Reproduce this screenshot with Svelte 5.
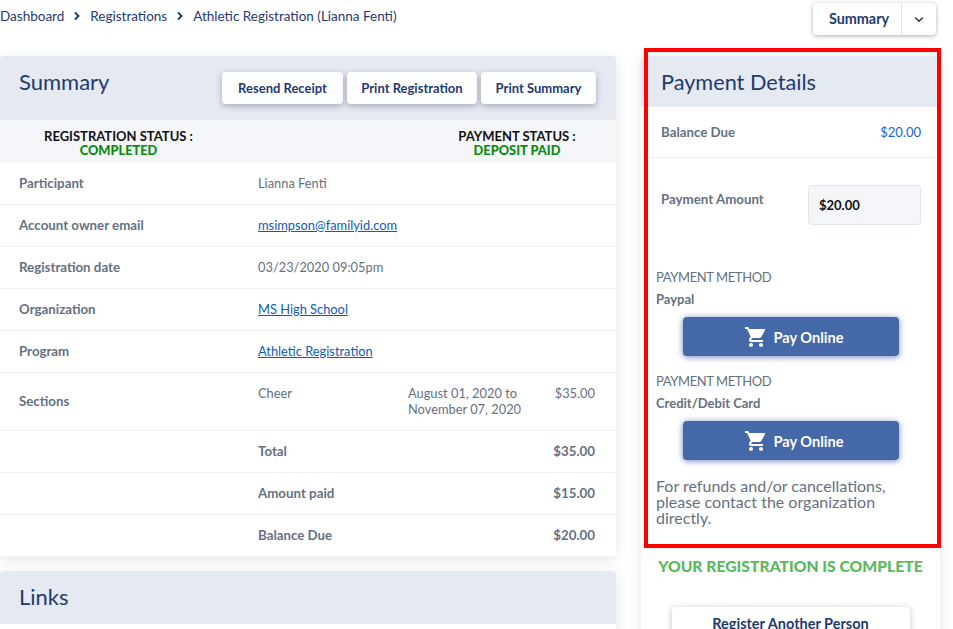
<script>
  const rows = [
    { label: 'Participant', value: 'Lianna Fenti' },
    { label: 'Account owner email', value: 'msimpson@familyid.com', link: true },
    { label: 'Registration date', value: '03/23/2020 09:05pm' },
    { label: 'Organization', value: 'MS High School', link: true },
    { label: 'Program', value: 'Athletic Registration', link: true }
  ];
  const totals = [
    { label: 'Total', value: '$35.00' },
    { label: 'Amount paid', value: '$15.00' },
    { label: 'Balance Due', value: '$20.00' }
  ];
  const methods = ['Paypal', 'Credit/Debit Card'];
</script>

<div class="page">
  <div class="topbar">
    <nav class="crumbs">
      <span>Dashboard</span>
      <svg class="sep" viewBox="0 0 8 10" width="8" height="10"><path d="M2 1.500 5.500 5 2 8.500" fill="none" stroke="#1f3a70" stroke-width="1.900"/></svg>
      <span>Registrations</span>
      <svg class="sep" viewBox="0 0 8 10" width="8" height="10"><path d="M2 1.500 5.500 5 2 8.500" fill="none" stroke="#1f3a70" stroke-width="1.900"/></svg>
      <span>Athletic Registration (Lianna Fenti)</span>
    </nav>
    <div class="split">
      <span class="split-label">Summary</span>
      <span class="split-caret">
        <svg viewBox="0 0 12 8" width="10" height="7"><path d="M1.500 1.500 6 6l4.500-4.500" fill="none" stroke="#333" stroke-width="1.800"/></svg>
      </span>
    </div>
  </div>

  <div class="columns">
    <div class="left">
      <section class="card">
        <header class="head summary-head">
          <h2>Summary</h2>
          <div class="actions">
            <button class="r1">Resend Receipt</button>
            <button class="r2">Print Registration</button>
            <button class="r3">Print Summary</button>
          </div>
        </header>
        <div class="status">
          <div class="st st1"><b>REGISTRATION STATUS :</b><em>COMPLETED</em></div>
          <div class="st st2"><b>PAYMENT STATUS :</b><em>DEPOSIT PAID</em></div>
        </div>
        {#each rows as r}
          <div class="row">
            <div class="lab">{r.label}</div>
            <div class="val">{#if r.link}<a href="#top">{r.value}</a>{:else}{r.value}{/if}</div>
          </div>
        {/each}
        <div class="row sections">
          <div class="lab">Sections</div>
          <div class="val cheer">Cheer</div>
          <div class="val dates">August 01, 2020 to<br />November 07, 2020</div>
          <div class="val price">$35.00</div>
        </div>
        {#each totals as t}
          <div class="row total">
            <div class="lab"></div>
            <div class="lab t-lab">{t.label}</div>
            <div class="lab t-val">{t.value}</div>
          </div>
        {/each}
      </section>

      <section class="card links">
        <header class="head links-head"><h2>Links</h2></header>
      </section>
    </div>

    <aside class="right">
      <div class="pay-card">
        <header class="head pay-head"><h2>Payment Details</h2></header>
        <div class="balance">
          <span class="lab">Balance Due</span>
          <span class="amount">$20.00</span>
        </div>
        <div class="pay-amount">
          <span class="lab">Payment Amount</span>
          <div class="input">$20.00</div>
        </div>
        <div class="methods">
          {#each methods as m}
            <div class="method">
              <div class="m-title">PAYMENT METHOD</div>
              <div class="m-name">{m}</div>
              <button class="pay">
                <svg viewBox="0 0 24 24" width="24" height="24"><path fill="#fff" d="M7 18c-1.100 0-1.990.9-1.990 2S5.900 22 7 22s2-.9 2-2-.9-2-2-2zM1 2v2h2l3.600 7.590-1.350 2.450c-.16.280-.25.610-.25.960 0 1.100.9 2 2 2h12v-2H7.420c-.14 0-.25-.110-.25-.250l.03-.120.9-1.630h7.450c.750 0 1.410-.410 1.750-1.030l3.580-6.490A1 1 0 0 0 20 4H5.210l-.94-2H1zm16 16c-1.100 0-1.990.9-1.990 2s.89 2 1.990 2 2-.9 2-2-.9-2-2-2z"/></svg>
                <span>Pay Online</span>
              </button>
            </div>
          {/each}
          <p class="note">For refunds and/or cancellations, please contact the organization directly.</p>
        </div>
        <div class="complete">YOUR REGISTRATION IS COMPLETE</div>
        <button class="another">Register Another Person</button>
      </div>
      <div class="highlight"></div>
    </aside>
  </div>
</div>

<style>
  :global(body) {
    margin: 0;
    background: #fff;
    overflow: hidden;
  }
  .page {
    width: 953px;
    height: 629px;
    overflow: hidden;
    font-family: Lato, "Liberation Sans", sans-serif;
    font-size: 13px;
    color: #65717f;
    background: #fff;
  }
  .topbar {
    height: 56px;
    display: flex;
    justify-content: space-between;
    align-items: flex-start;
    padding-right: 17px;
  }
  .crumbs {
    display: flex;
    align-items: center;
    gap: 10px;
    height: 32px;
    color: #1f3a70;
    font-size: 13.5px;
  }
  .sep { margin: 0 -1px; }
  .split {
    display: flex;
    height: 32px;
    margin-top: 3px;
    width: 123px;
    background: #fff;
    border-radius: 4px;
    box-shadow: 0 1px 4px rgba(40, 50, 80, 0.4);
    color: #1f3a70;
    font-weight: 700;
    font-size: 14.4px;
    line-height: 32px;
  }
  .split-label {
    width: 84px;
    padding-left: 4px;
    text-align: center;
    border-right: 1px solid #dfe3ea;
  }
  .split-caret {
    flex: 1;
    display: flex;
    align-items: center;
    justify-content: center;
  }
  .columns {
    display: flex;
    gap: 25px;
  }
  .left { width: 616px; }
  .right {
    width: 299px;
    position: relative;
  }
  .card {
    background: #fff;
    border-radius: 4px;
    box-shadow: 0 4px 14px rgba(60, 70, 90, 0.13);
  }
  .head {
    background: #e5e9f2;
    display: flex;
    justify-content: space-between;
    border-radius: 4px 4px 0 0;
    padding-left: 19px;
  }
  h2 {
    margin: 0;
    font-weight: 400;
    font-size: 22px;
    line-height: 26px;
    color: #1f3a70;
  }
  .summary-head { height: 64px; padding-top: 13px; padding-right: 20px; box-sizing: border-box; }
  .actions { display: flex; gap: 4px; margin-top: 3px; }
  .actions button {
    height: 32px;
    border: 0;
    border-radius: 4px;
    background: #fff;
    box-shadow: 0 2px 6px rgba(40, 50, 80, 0.35);
    color: #1f3a70;
    font: 700 13px Lato, "Liberation Sans", sans-serif;
    padding: 0;
  }
  .r1 { width: 121px; }
  .r2 { width: 130px; }
  .r3 { width: 115px; }
  .status {
    height: 43px;
    background: #f4f6fa;
    display: flex;
    font-size: 13px;
    line-height: 14px;
    box-sizing: border-box;
    padding-top: 9px;
  }
  .st { display: flex; flex-direction: column; align-items: center; }
  .st b { color: #111; font-weight: 700; }
  .st em { color: #0a8a12; font-style: normal; font-weight: 900; font-size: 12.8px; }
  .st1 { width: 237px; }
  .st2 { width: 160px; margin-left: 200px; }
  .row {
    height: 42px;
    display: flex;
    align-items: center;
    padding: 0 21px 2px 19px;
    border-bottom: 1px solid #f0f1f4;
    box-sizing: border-box;
  }
  .row:last-child { border-bottom: 0; height: 41px; }
  .lab { width: 239px; font-weight: 700; color: #65717f; font-size: 13.3px; }
  .val { color: #65717f; font-size: 12.85px; }
  .val a { color: #0e5cb8; }
  .sections { height: 58px; align-items: flex-start; padding-bottom: 0; }
  .sections .lab { align-self: center; margin-bottom: 2px; }
  .sections .val { margin-top: 12px; line-height: 16px; }
  .cheer { width: 0; white-space: nowrap; }
  .dates { margin-left: 150px; width: 146px; }
  .price { margin-left: auto; }
  .t-lab { flex: 1; width: auto; }
  .t-val { width: auto; }
  .links { margin-top: 15px; height: 80px; }
  .links-head { height: 53px; padding-top: 13px; box-sizing: border-box; }
  .pay-card {
    background: #fff;
    box-shadow: 0 0 12px rgba(60, 70, 90, 0.13);
    border-radius: 4px;
    height: 640px;
  }
  .pay-head { height: 51px; padding-top: 13px; padding-left: 20px; box-sizing: border-box; }
  .pay-head h2 { font-size: 21.7px; }
  .balance {
    height: 51px;
    display: flex;
    align-items: center;
    justify-content: space-between;
    padding: 0 19px 0 20px;
    border-bottom: 1px solid #eef0f3;
    box-sizing: border-box;
  }
  .balance .lab, .pay-amount .lab { width: auto; }
  .amount { color: #1466c8; }
  .pay-amount {
    display: flex;
    justify-content: space-between;
    padding: 27px 19px 0 20px;
    height: 111px;
    box-sizing: border-box;
  }
  .pay-amount .lab { margin-top: 6px; }
  .input {
    width: 113px;
    height: 40px;
    box-sizing: border-box;
    border: 1px solid #e1e5ee;
    border-radius: 4px;
    background: #f4f6fa;
    color: #111;
    font-weight: 700;
    line-height: 38px;
    padding-left: 10px;
  }
  .methods { padding: 0 15px; }
  .method { height: 104px; }
  .m-title { line-height: 16px; font-size: 13px; letter-spacing: -0.4px; }
  .m-name { font-weight: 700; font-size: 13px; line-height: 16px; margin-top: 6px; }
  .pay {
    display: flex;
    align-items: center;
    justify-content: center;
    gap: 5px;
    width: 216px;
    height: 39px;
    margin: 10px 0 0 27px;
    border: 0;
    border-radius: 4px;
    background: #4468a8;
    box-shadow: 0 1px 6px rgba(50, 80, 160, 0.7);
    color: #fff;
    font: 700 14.6px Lato, "Liberation Sans", sans-serif;
    padding: 1px 0 0 6px;
  }
  .note {
    margin: 1px 0 0;
    font-size: 16px;
    line-height: 16px;
    color: #65717f;
  }
  .complete {
    margin-top: 30px;
    text-align: center;
    color: #5cb85c;
    font-weight: 900;
    font-size: 15.7px;
    line-height: 20px;
  }
  .another {
    display: block;
    width: 238px;
    height: 32px;
    margin: 31px auto 0;
    border: 0;
    border-radius: 4px;
    background: #fff;
    box-shadow: 0 1px 6px rgba(40, 50, 80, 0.3);
    color: #1f3a70;
    font: 700 14.5px Lato, "Liberation Sans", sans-serif;
    padding: 0;
  }
  .highlight {
    position: absolute;
    left: 3px;
    top: -8px;
    width: 297px;
    height: 500px;
    box-sizing: border-box;
    border: 4px solid #ff0000;
    pointer-events: none;
  }
</style>
